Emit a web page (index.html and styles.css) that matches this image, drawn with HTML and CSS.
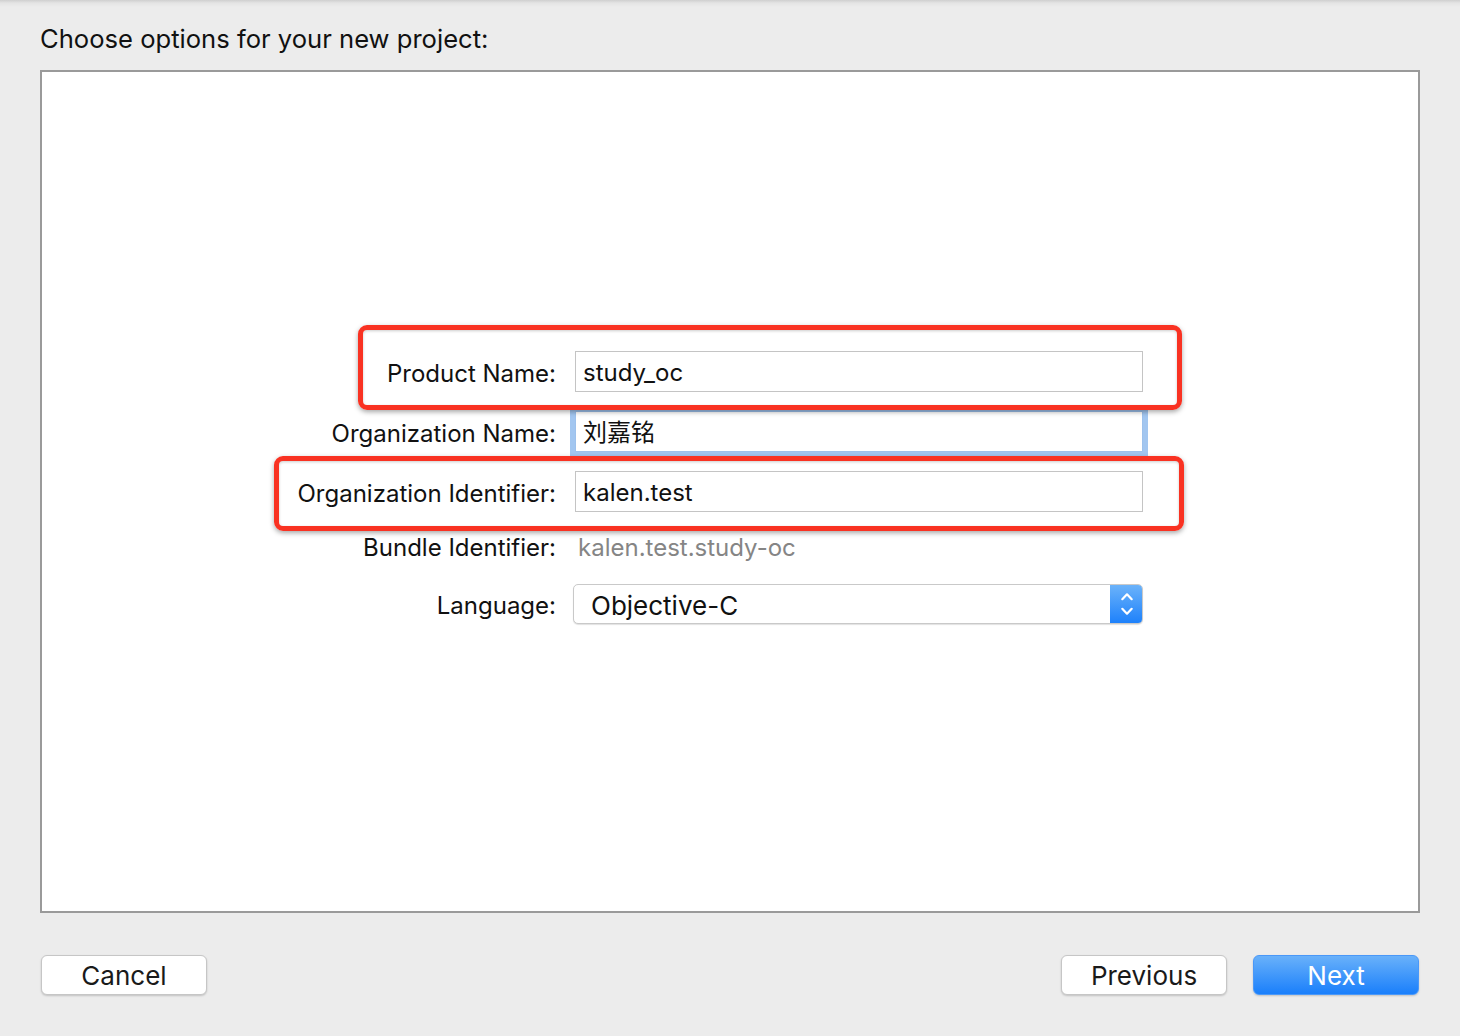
FILE: index.html
```html
<!DOCTYPE html>
<html>
<head>
<meta charset="utf-8">
<link rel="stylesheet" href="styles.css">
</head>
<body>
<div class="window">
  <h1 class="title">Choose options for your new project:</h1>
  <div class="panel">
    <div class="form">
      <div class="row">
        <span class="lbl">Product Name:</span>
        <div class="field">study_oc</div>
      </div>
      <div class="row">
        <span class="lbl">Organization Name:</span>
        <div class="field focused">刘嘉铭</div>
      </div>
      <div class="row">
        <span class="lbl">Organization Identifier:</span>
        <div class="field">kalen.test</div>
      </div>
      <div class="row row-bundle">
        <span class="lbl">Bundle Identifier:</span>
        <div class="value">kalen.test.study-oc</div>
      </div>
      <div class="row row-lang">
        <span class="lbl">Language:</span>
        <div class="popup">
          <span class="popup-text">Objective-C</span>
          <span class="stepper">
            <svg width="14" height="24" viewBox="0 0 14 24"><path d="M2.3 7.2 L7 2.3 L11.7 7.2 M2.3 16.8 L7 21.7 L11.7 16.8" fill="none" stroke="#fff" stroke-width="2.2" stroke-linecap="round" stroke-linejoin="round"/></svg>
          </span>
        </div>
      </div>
    </div>
    <div class="mark mark-product"></div>
    <div class="mark mark-orgid"></div>
  </div>
  <div class="buttons">
    <button class="btn">Cancel</button>
    <button class="btn btn-prev">Previous</button>
    <button class="btn btn-next">Next</button>
  </div>
</div>
</body>
</html>
```

FILE: styles.css
```css
html, body {
  margin: 0;
  padding: 0;
}
body {
  background: #ececec;
  font-family: Inter, "Liberation Sans", "Noto Sans CJK SC", sans-serif;
  color: #1a1a1a;
}
.window {
  width: 1460px;
  height: 1036px;
  background: linear-gradient(to bottom, #cfcfcf 0px, #e4e4e4 3px, #ececec 7px);
}
.title {
  margin: 0;
  height: 70px;
  box-sizing: border-box;
  padding: 24px 0 0 40px;
  font-size: 25.6px;
  line-height: 30px;
  font-weight: 400;
  color: #111;
}
.panel {
  position: relative;
  margin: 0 40px;
  height: 843px;
  box-sizing: border-box;
  border: 2px solid #9a9a9a;
  background: #fff;
}
.form {
  padding-top: 279px;
  display: flex;
  flex-direction: column;
  gap: 19px;
}
.row {
  display: grid;
  grid-template-columns: 514px 568px;
  column-gap: 19px;
  align-items: center;
  height: 41px;
}
.row-bundle {
  height: 32px;
}
.row-lang {
  margin-top: 2px;
  height: 40px;
}
.lbl {
  text-align: right;
  font-size: 24px;
  color: #111;
  padding-top: 4px;
}
.row-bundle .lbl {
  padding-top: 0;
}
.row-lang .lbl {
  padding-top: 2px;
}
.field {
  height: 41px;
  box-sizing: border-box;
  border: 1px solid #c4c4c4;
  background: #fff;
  padding: 3px 0 0 7px;
  font-size: 24px;
  line-height: 36px;
  color: #111;
}
.field.focused {
  box-shadow: 0 0 0 5px #a2c6f0;
  border-color: #9dc1ec;
}
.value {
  padding-left: 3px;
  font-size: 24px;
  color: #858585;
}
.popup {
  margin-left: -2px;
  height: 40px;
  box-sizing: border-box;
  border: 1px solid #c9c9c9;
  border-radius: 5px;
  background: #fff;
  box-shadow: 0 1px 1px rgba(0,0,0,0.12);
  display: flex;
  align-items: center;
  overflow: hidden;
}
.popup-text {
  flex: 1;
  padding: 2px 0 0 17px;
  font-size: 26px;
  color: #111;
}
.stepper {
  width: 33px;
  align-self: stretch;
  margin: -1px -1px -1px 0;
  background: linear-gradient(to bottom, #6db4fa, #1c80fb);
  border-radius: 0 5px 5px 0;
  display: flex;
  align-items: center;
  justify-content: center;
}
.mark {
  position: absolute;
  box-sizing: border-box;
  border: 5px solid #f93222;
  border-radius: 9px;
  box-shadow: 0 2px 5px rgba(0,0,0,0.35), inset 0 1px 3px rgba(0,0,0,0.2);
}
.mark-product {
  left: 316px;
  top: 253px;
  width: 824px;
  height: 85px;
}
.mark-orgid {
  left: 232px;
  top: 384px;
  width: 910px;
  height: 75px;
}
.buttons {
  display: flex;
  padding: 42px 41px 0 41px;
}
.btn {
  width: 166px;
  height: 40px;
  border: 1px solid #c6c6c6;
  border-radius: 6px;
  background: #fff;
  box-shadow: 0 1px 2px rgba(0,0,0,0.18);
  font-family: Inter, "Liberation Sans", sans-serif;
  font-size: 26px;
  color: #1a1a1a;
  padding: 0;
}
.btn-prev {
  margin-left: auto;
}
.btn-next {
  margin-left: 26px;
  border-color: #4a98f8;
  background: linear-gradient(to bottom, #69b1fa, #1a7ffb);
  color: #fff;
}
```
